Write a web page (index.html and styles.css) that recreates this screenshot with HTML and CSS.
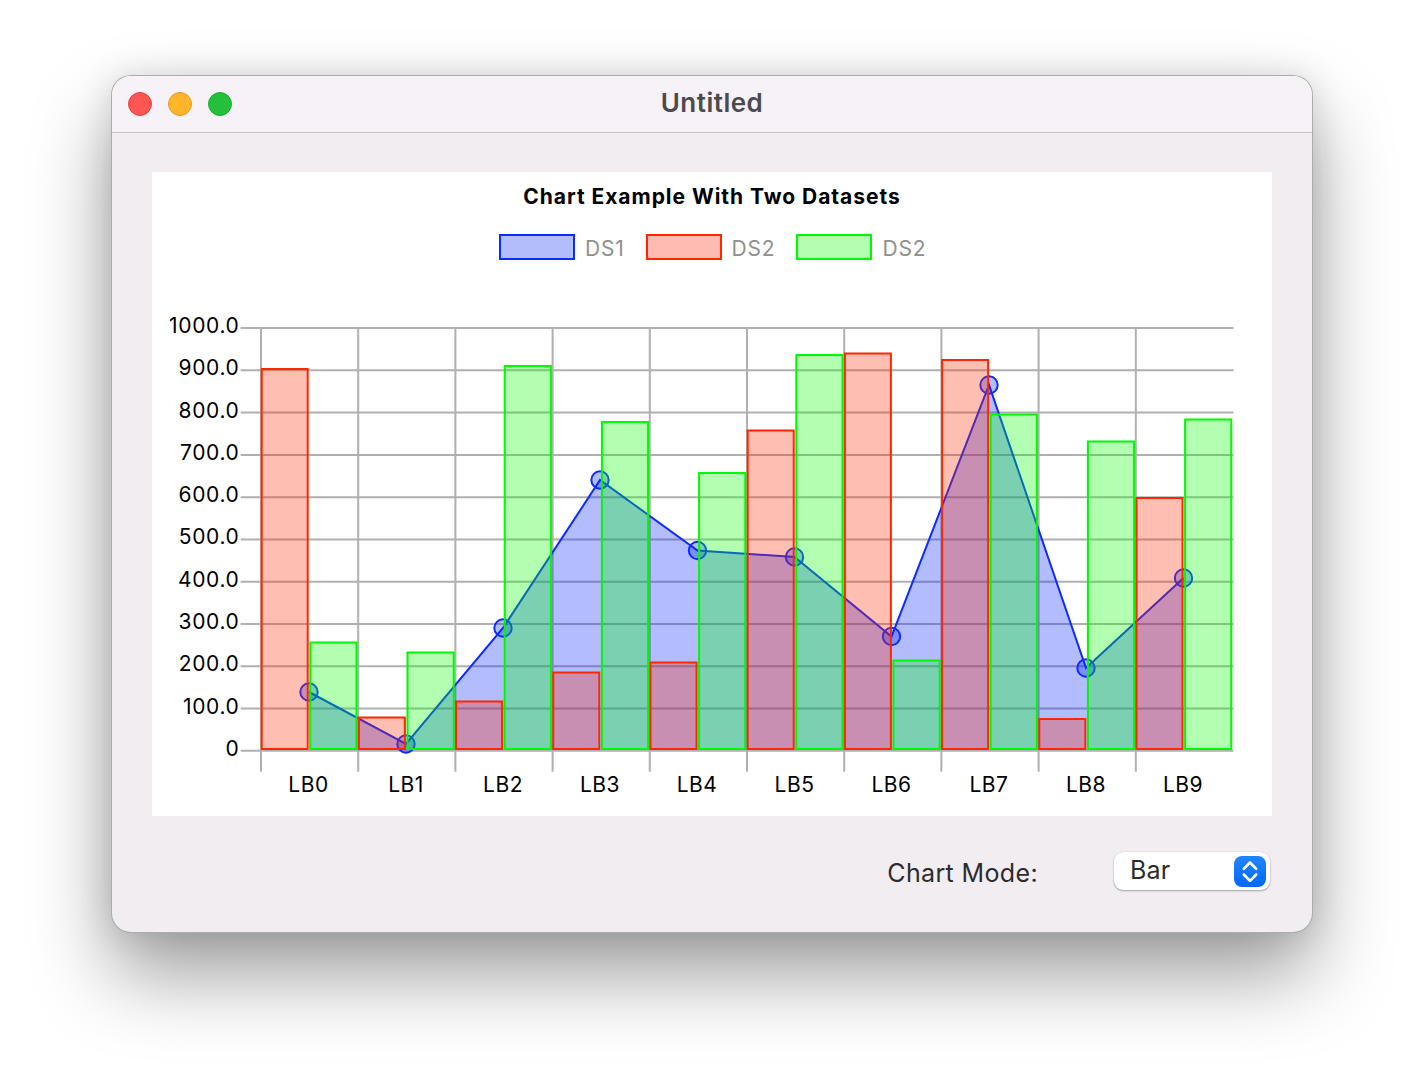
FILE: index.html
```html
<!DOCTYPE html>
<html lang="en">
<head>
<meta charset="utf-8">
<title>Untitled</title>
<link rel="stylesheet" href="styles.css">
</head>
<body>
<div class="window">
  <header class="titlebar">
    <div class="lights">
      <span class="light red"></span>
      <span class="light yellow"></span>
      <span class="light green"></span>
    </div>
    <div class="window-title">Untitled</div>
  </header>
  <main class="content">
    <section class="chart">
      <h1 class="chart-title">Chart Example With Two Datasets</h1>
      <ul class="legend">
        <li class="legend-item"><span class="swatch swatch-blue"></span><span class="legend-text">DS1</span></li>
        <li class="legend-item"><span class="swatch swatch-red"></span><span class="legend-text">DS2</span></li>
        <li class="legend-item"><span class="swatch swatch-green"></span><span class="legend-text">DS2</span></li>
      </ul>
      <svg class="plot" viewBox="152 290 1120 526" width="1120" height="526">
        <g class="grid">
          <path d="M240.7 328H1233.5M240.7 370.3H1233.5M240.7 412.6H1233.5M240.7 454.9H1233.5M240.7 497.2H1233.5M240.7 539.4H1233.5M240.7 581.7H1233.5M240.7 623.9H1233.5M240.7 666.2H1233.5M240.7 708.5H1233.5M240.7 750.7H1233.5"/>
          <path d="M261 328V771.7M358.2 328V771.7M455.4 328V771.7M552.6 328V771.7M649.8 328V771.7M747 328V771.7M844.2 328V771.7M941.4 328V771.7M1038.6 328V771.7M1135.8 328V771.7"/>
        </g>
        <g class="y-labels">
          <text x="239.5" y="333">1000.0</text>
          <text x="239.5" y="375">900.0</text>
          <text x="239.5" y="418">800.0</text>
          <text x="239.5" y="460">700.0</text>
          <text x="239.5" y="502">600.0</text>
          <text x="239.5" y="544">500.0</text>
          <text x="239.5" y="587">400.0</text>
          <text x="239.5" y="629">300.0</text>
          <text x="239.5" y="671">200.0</text>
          <text x="239.5" y="714">100.0</text>
          <text x="239.5" y="756">0</text>
        </g>
        <g class="x-labels">
          <text x="308.5" y="792">LB0</text>
          <text x="406" y="792">LB1</text>
          <text x="503" y="792">LB2</text>
          <text x="600" y="792">LB3</text>
          <text x="697" y="792">LB4</text>
          <text x="794.5" y="792">LB5</text>
          <text x="891.5" y="792">LB6</text>
          <text x="989" y="792">LB7</text>
          <text x="1086" y="792">LB8</text>
          <text x="1183" y="792">LB9</text>
        </g>
        <path class="ds1-area" d="M309 692L406 744L503 628L600 480L697.5 550.5L794.5 557L891.5 636.5L989 385L1086 668L1183.5 578V750H309Z"/>
        <path class="ds1-line" d="M309 692L406 744L503 628L600 480L697.5 550.5L794.5 557L891.5 636.5L989 385L1086 668L1183.5 578"/>
        <g class="ds1-points">
          <circle cx="309" cy="692" r="8.7"/>
          <circle cx="406" cy="744" r="8.7"/>
          <circle cx="503" cy="628" r="8.7"/>
          <circle cx="600" cy="480" r="8.7"/>
          <circle cx="697.5" cy="550.5" r="8.7"/>
          <circle cx="794.5" cy="557" r="8.7"/>
          <circle cx="891.5" cy="636.5" r="8.7"/>
          <circle cx="989" cy="385" r="8.7"/>
          <circle cx="1086" cy="668" r="8.7"/>
          <circle cx="1183.5" cy="578" r="8.7"/>
        </g>
        <g class="ds2-bars">
          <rect x="261.7" y="369" width="46" height="380"/>
          <rect x="358.9" y="717.5" width="46" height="31.5"/>
          <rect x="456.1" y="701.5" width="46" height="47.5"/>
          <rect x="553.3" y="672.5" width="46" height="76.5"/>
          <rect x="650.5" y="662.5" width="46" height="86.5"/>
          <rect x="747.7" y="430.5" width="46" height="318.5"/>
          <rect x="844.9" y="353.5" width="46" height="395.5"/>
          <rect x="942.1" y="360" width="46" height="389"/>
          <rect x="1039.3" y="719" width="46" height="30"/>
          <rect x="1136.5" y="498" width="46" height="251"/>
        </g>
        <g class="ds3-bars">
          <rect x="310.3" y="642.5" width="46.2" height="106.5"/>
          <rect x="407.5" y="652.5" width="46.2" height="96.5"/>
          <rect x="504.7" y="366" width="46.2" height="383"/>
          <rect x="601.9" y="422" width="46.2" height="327"/>
          <rect x="699.1" y="473" width="46.2" height="276"/>
          <rect x="796.3" y="355" width="46.2" height="394"/>
          <rect x="893.5" y="660.5" width="46.2" height="88.5"/>
          <rect x="990.7" y="414.5" width="46.2" height="334.5"/>
          <rect x="1087.9" y="441.5" width="46.2" height="307.5"/>
          <rect x="1185.1" y="419.5" width="46.2" height="329.5"/>
        </g>
      </svg>
    </section>
    <footer class="controls">
      <span class="mode-label">Chart Mode:</span>
      <div class="select">
        <span class="select-value">Bar</span>
        <span class="stepper">
          <svg viewBox="0 0 32 31" width="32" height="31"><path d="M9.8 12.8L16 6.5L22.2 12.8M9.8 18.5L16 24.8L22.2 18.5"/></svg>
        </span>
      </div>
    </footer>
  </main>
</div>
</body>
</html>
```
FILE: styles.css
```css
* { box-sizing: border-box; }
html, body { margin: 0; height: 100%; background: #fff; overflow: hidden; }
body { padding: 75px 0 0 111px; font-family: Inter, "Liberation Sans", sans-serif; }

.window {
  width: 1202px;
  height: 858px;
  border: 1px solid rgba(0, 0, 0, .28);
  border-radius: 20px;
  background: #f1edf1;
  box-shadow: 0 42px 80px rgba(0, 0, 0, .38), 0 0 34px rgba(0, 0, 0, .12);
  overflow: hidden;
  display: flex;
  flex-direction: column;
}

.titlebar {
  height: 57px;
  flex: none;
  background: #f6f2f7;
  border-bottom: 1px solid #c8c5c9;
  display: flex;
  align-items: center;
  position: relative;
}
.lights { display: flex; gap: 16px; padding: 0 0 0 16px; }
.light { width: 24px; height: 24px; border-radius: 50%; border: 1px solid; }
.red { background: #ff5552; border-color: #e2443f; }
.yellow { background: #ffb429; border-color: #e09c1e; }
.green { background: #24c03b; border-color: #1cab2e; }
.window-title {
  position: absolute;
  left: 0; right: 0; top: 10px;
  text-align: center;
  font-size: 26px;
  line-height: 34px;
  letter-spacing: .5px;
  font-weight: 600;
  color: #4b4a4c;
}

.content { flex: 1; padding: 39px 40px 0; display: flex; flex-direction: column; }

.chart { width: 1120px; height: 644px; background: #fff; flex: none; display: flex; flex-direction: column; }
.chart-title {
  margin: 10px 0 0;
  text-align: center;
  font-size: 21px;
  line-height: 30px;
  letter-spacing: .97px;
  font-weight: 700;
  color: #000;
}
.legend {
  list-style: none;
  margin: 22px 0 0;
  padding: 0 0 0 347px;
  height: 26px;
  display: flex;
  gap: 21px;
}
.legend-item { display: flex; align-items: flex-start; gap: 10px; }
.legend-text { font-size: 21px; line-height: 25px; letter-spacing: .8px; color: #8f8f8f; padding-top: 2px; }
.swatch { width: 76px; height: 26px; border: 2px solid; display: block; }
.swatch-blue { background: #b3bdfc; border-color: #0b2bff; }
.swatch-red { background: #ffbab2; border-color: #ff2600; }
.swatch-green { background: #b3feb0; border-color: #00f800; }

.plot { display: block; margin-top: 30px; flex: none; }
.grid path { fill: none; stroke: #b0b0b0; stroke-width: 2; }
.y-labels text { font-size: 21px; letter-spacing: .65px; text-anchor: end; fill: #000; }
.x-labels text { font-size: 21px; letter-spacing: .5px; text-anchor: middle; fill: #000; }
.ds1-area { fill: rgba(0, 32, 255, .3); }
.ds1-line { fill: none; stroke: #0b2bff; stroke-width: 2; }
.ds1-points circle { fill: rgba(0, 32, 255, .3); stroke: #0b2bff; stroke-width: 2; }
.ds2-bars rect { fill: rgba(255, 40, 0, .3); stroke: #ff2600; stroke-width: 2; }
.ds3-bars rect { fill: rgba(0, 255, 0, .3); stroke: #00f800; stroke-width: 2; }

.controls { display: flex; justify-content: flex-end; align-items: flex-start; gap: 76px; padding: 36px 2px 0 0; }
.mode-label { font-size: 25px; line-height: 42px; letter-spacing: .36px; color: #2c2b2d; }
.select {
  width: 156px;
  height: 38px;
  background: #fff;
  border-radius: 9px;
  box-shadow: 0 1px 2px rgba(0, 0, 0, .3), 0 0 1px rgba(0, 0, 0, .2);
  display: flex;
  align-items: flex-start;
  justify-content: space-between;
  padding: 4px 4px 0 16px;
}
.select-value { font-size: 25px; line-height: 28px; letter-spacing: .2px; color: #2c2b2d; }
.stepper {
  width: 32px;
  height: 31px;
  border-radius: 8px;
  background: linear-gradient(#2285ff, #0067ff);
  display: block;
}
.stepper svg { display: block; }
.stepper path { fill: none; stroke: #fff; stroke-width: 2.6; stroke-linecap: round; stroke-linejoin: round; }
```
